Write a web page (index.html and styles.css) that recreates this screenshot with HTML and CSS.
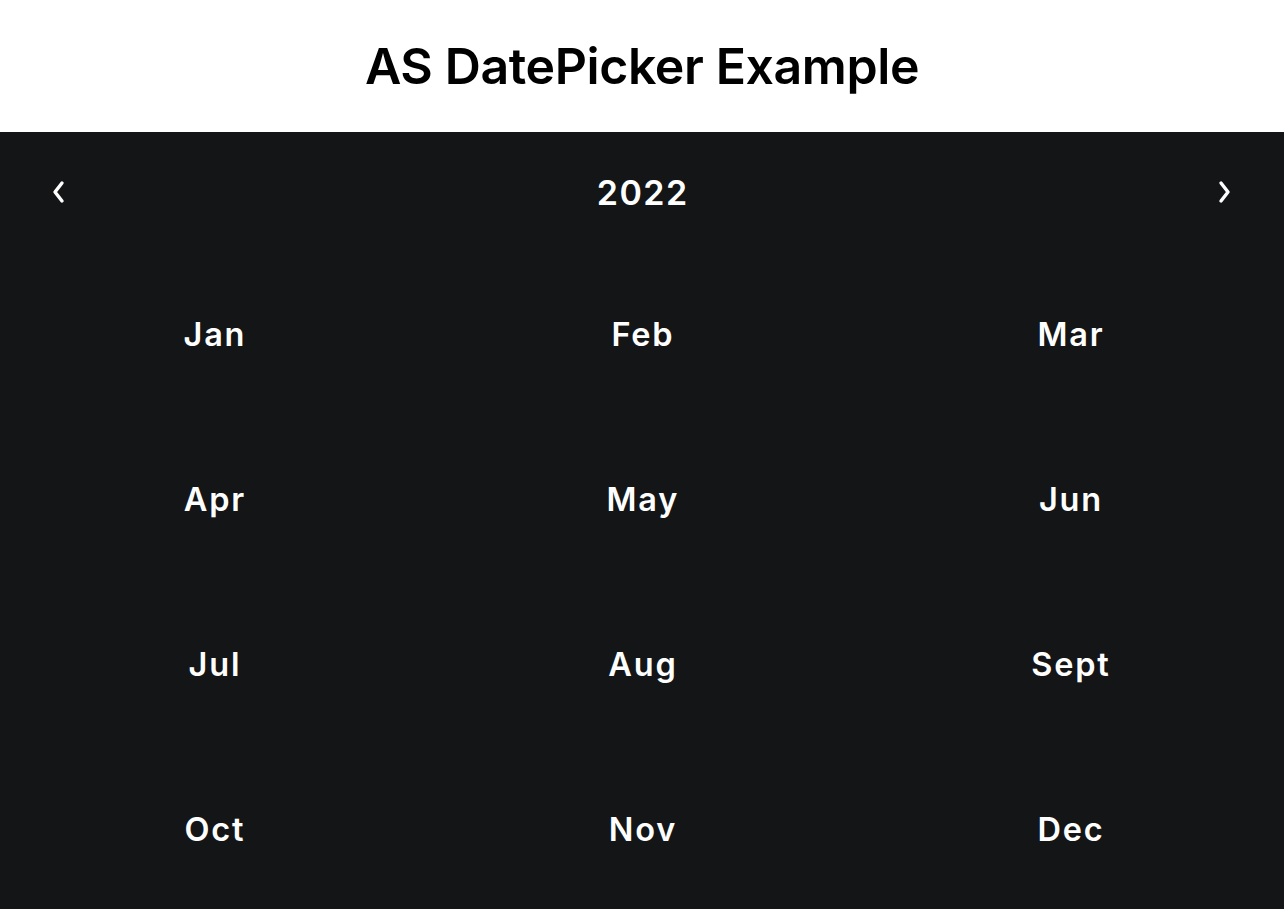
FILE: index.html
```html
<!DOCTYPE html>
<html>
<head>
<meta charset="utf-8">
<link rel="stylesheet" href="styles.css">
</head>
<body>
<header class="title-bar"><h1 class="title">AS DatePicker Example</h1></header>
<main class="picker">
  <div class="picker-head">
    <button class="nav"><svg width="16" height="26" viewBox="0 0 16 26"><path d="M11 4 L4 13 L11 22" fill="none" stroke="#fff" stroke-width="3.4" stroke-linecap="round" stroke-linejoin="round"/></svg></button>
    <div class="year">2022</div>
    <button class="nav"><svg width="16" height="26" viewBox="0 0 16 26"><path d="M4 4 L11 13 L4 22" fill="none" stroke="#fff" stroke-width="3.4" stroke-linecap="round" stroke-linejoin="round"/></svg></button>
  </div>
  <div class="months">
    <div class="month">Jan</div><div class="month">Feb</div><div class="month">Mar</div>
    <div class="month">Apr</div><div class="month">May</div><div class="month">Jun</div>
    <div class="month">Jul</div><div class="month">Aug</div><div class="month">Sept</div>
    <div class="month">Oct</div><div class="month">Nov</div><div class="month">Dec</div>
  </div>
</main>
</body>
</html>
```
FILE: styles.css
```css
html, body { margin: 0; padding: 0; }
body { font-family: Inter, "Noto Sans", sans-serif; background: #141517; overflow: hidden; }
.title-bar { background: #fff; height: 132px; display: flex; align-items: center; justify-content: center; }
.title { margin: 0; font-size: 50px; font-weight: 600; color: #000; letter-spacing: -0.4px; }
.picker { background: #141517; color: #fff; }
.picker-head { height: 120px; display: flex; align-items: center; justify-content: space-between; padding: 0 45px; }
.nav { background: none; border: 0; padding: 0; width: 28px; height: 28px; display: flex; align-items: center; justify-content: center; }
.year { font-size: 34px; font-weight: 600; letter-spacing: 1.5px; padding-left: 1.5px; }
.months { display: grid; grid-template-columns: repeat(3, 1fr); grid-auto-rows: 165px; }
.month { display: flex; align-items: center; justify-content: center; font-size: 32.5px; font-weight: 600; letter-spacing: 1.8px; padding-left: 1.8px; }
```
